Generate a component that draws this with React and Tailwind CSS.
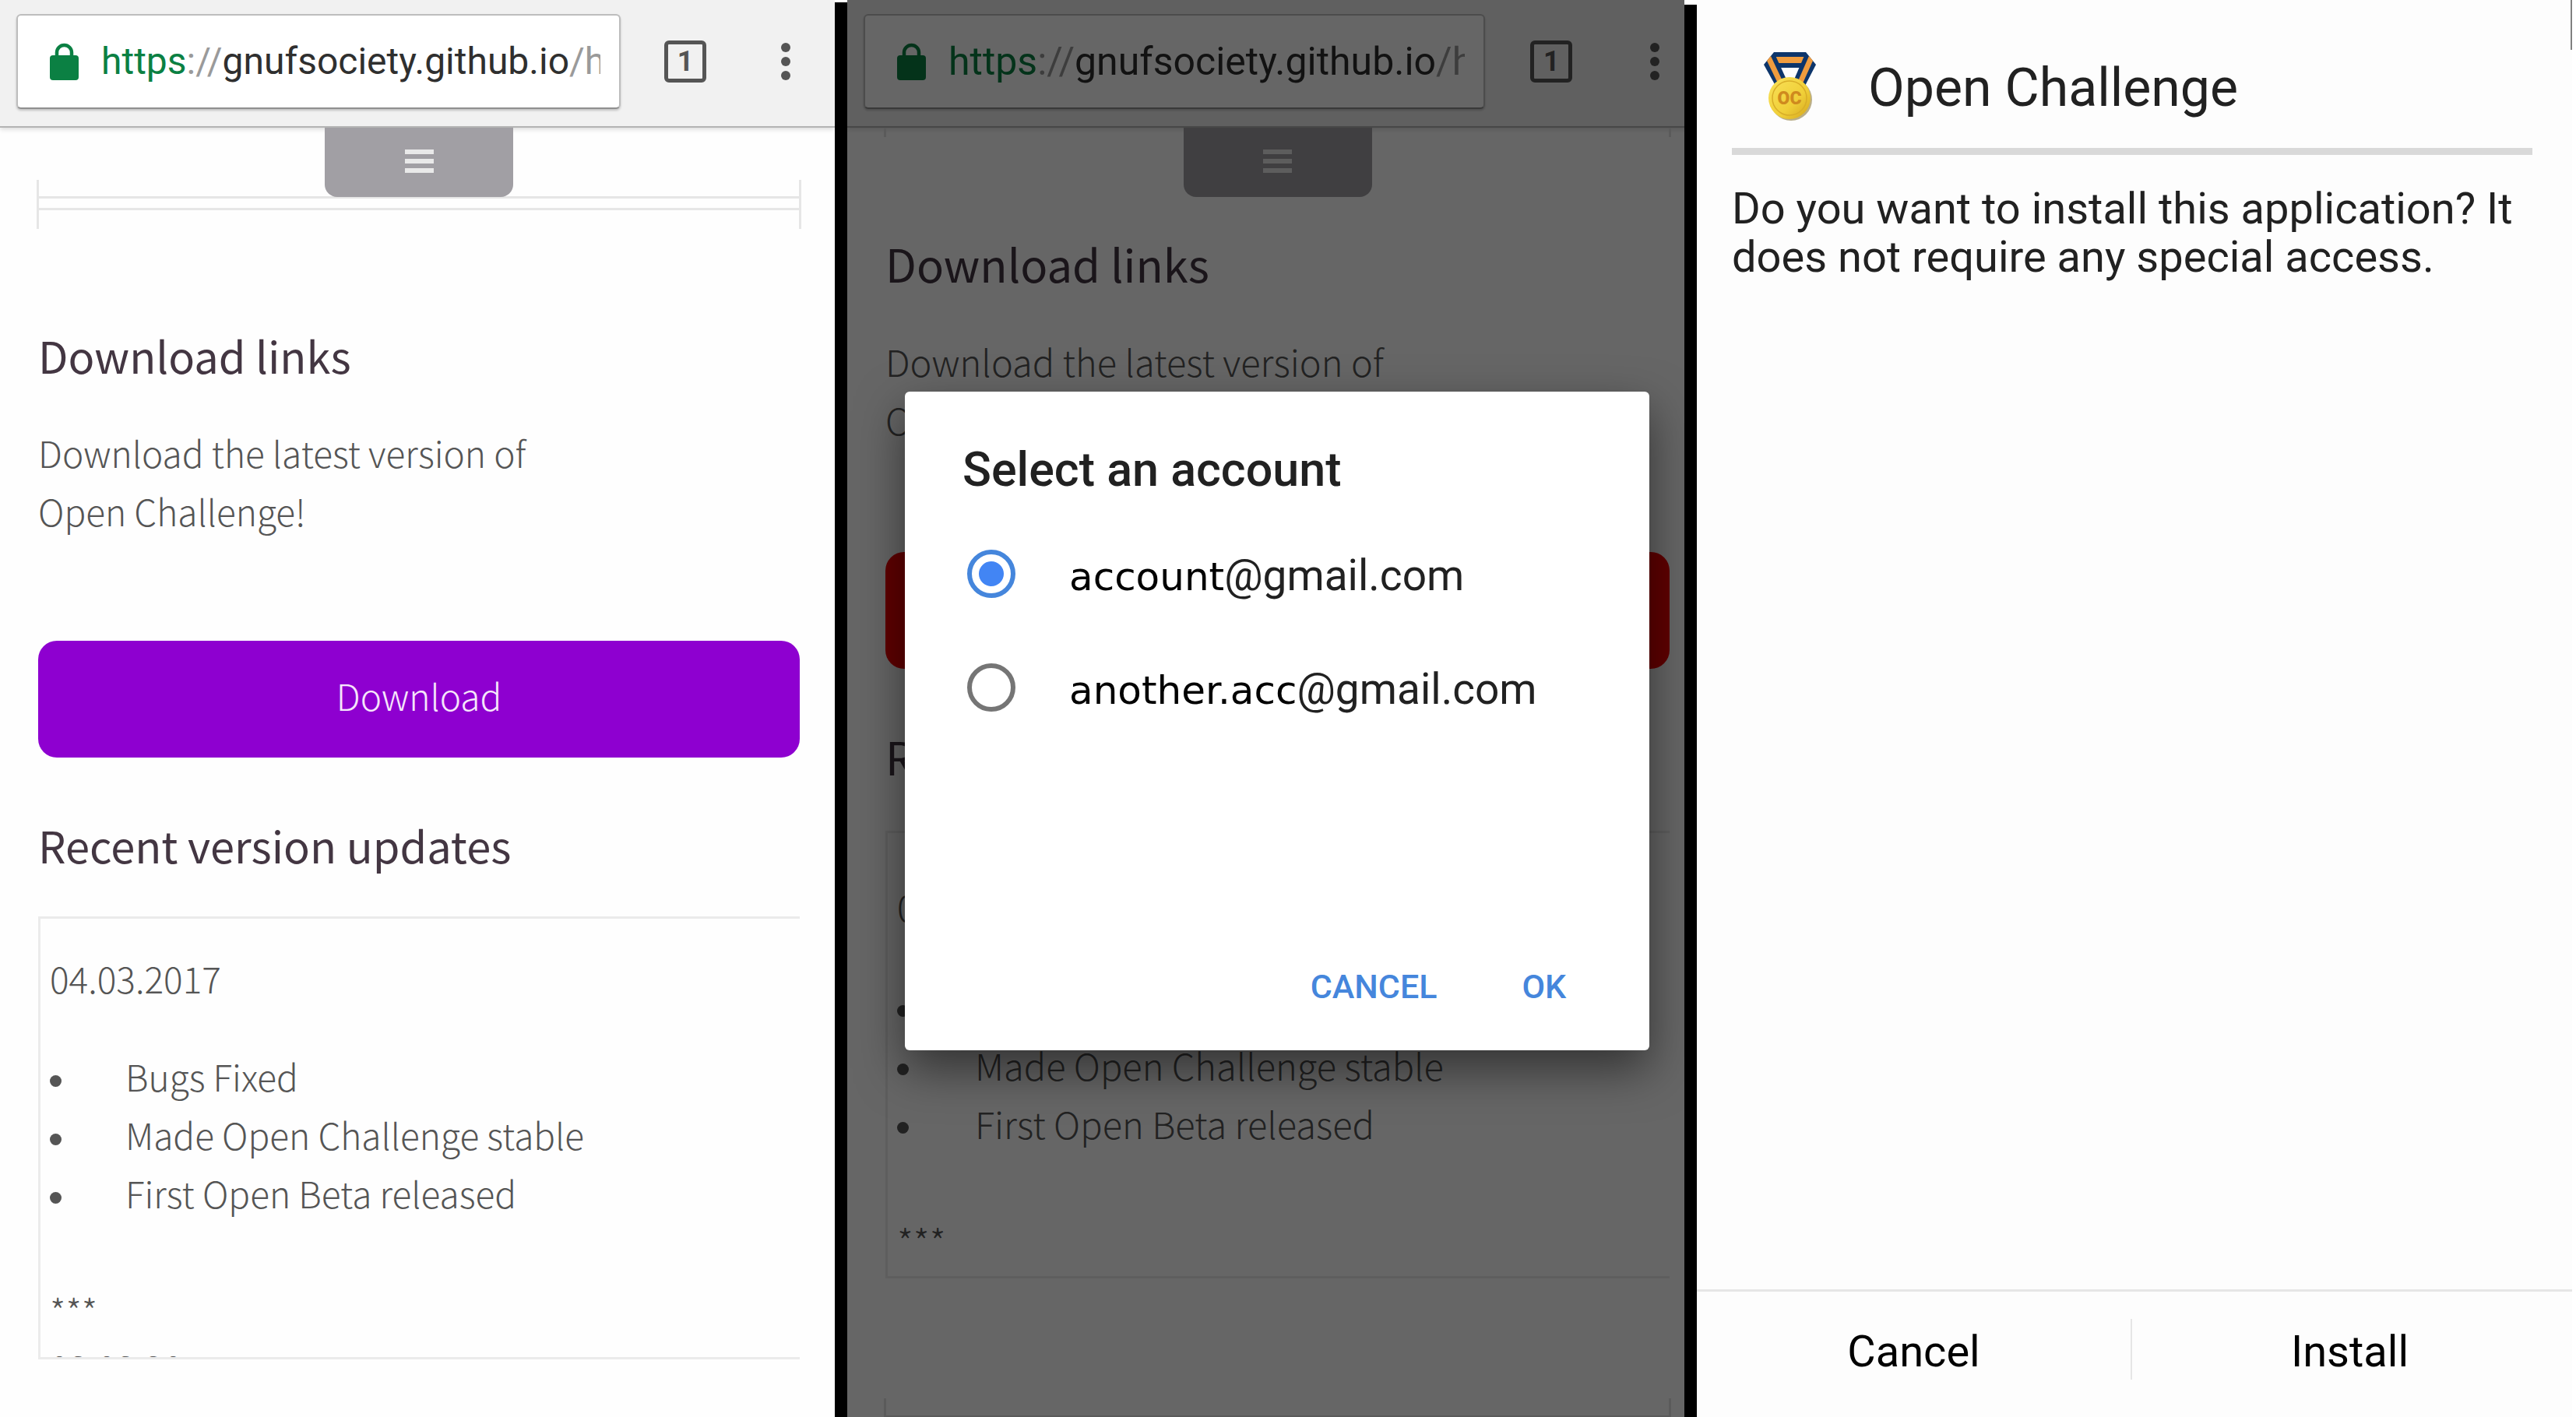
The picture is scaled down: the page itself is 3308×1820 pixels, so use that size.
import React from "react";

const releases = ["Bugs Fixed", "Made Open Challenge stable", "First Open Beta released"];

const small = {
  bar: "pr-[57px]",
  tabs: "ml-[56px]",
  dots: "ml-[96px]",
  main: "mr-[45px]",
  heading: "text-[56px]",
  body: "text-[46px]",
  url: "text-[48px]",
  rest: "pt-[126px]",
  buttonGap: "mt-[129px]",
  logGap: "mt-[56px]",
  logPad: "pt-[39px]",
  logHeight: "h-[569px]",
  listGap: "mt-[51px]",
  itemGap: "before:mr-[82px]",
};

const large = {
  bar: "pr-[64px]",
  tabs: "ml-[58px]",
  dots: "ml-[100px]",
  main: "mr-[51px]",
  heading: "text-[58px]",
  body: "text-[47px]",
  url: "text-[50px]",
  rest: "pt-[126px]",
  buttonGap: "mt-[133px]",
  logGap: "mt-[60px]",
  logPad: "pt-[56px]",
  logHeight: "h-[575px]",
  listGap: "mt-[54px]",
  itemGap: "before:mr-[85px]",
};

function BrowserBar({ size }) {
  return (
    <header
      className={`flex h-[164px] items-center border-b-2 border-[#b4b4b4] bg-[#f1f1f1] pb-1 pl-[21px] font-[Roboto,sans-serif] shadow-[0_2px_6px_rgba(0,0,0,0.15)] ${size.bar}`}
    >
      <div className="flex h-[122px] min-w-0 flex-1 items-center rounded-md border-2 border-[#bdbdbd] border-b-[#8f8f8f] bg-white pl-[41px] pr-[24px] shadow-[0_2px_3px_rgba(0,0,0,0.2)]">
        <svg className="mr-[29px] h-[48px] w-[37px] shrink-0" viewBox="0 0 37 48" aria-hidden="true">
          <path d="M9 18V12.500a9.500 9.500 0 0 1 19 0V18" fill="none" stroke="#0b8043" strokeWidth="4.500" />
          <rect x="0" y="16" width="37" height="32" rx="4" fill="#0b8043" />
        </svg>
        <div
          role="textbox"
          aria-label="Address"
          contentEditable
          suppressContentEditableWarning
          className={`min-w-0 flex-1 overflow-hidden whitespace-nowrap leading-[64px] text-[#2f2f2f] ${size.url}`}
        >
          <span className="text-[#0b8043]">https</span>
          <span className="text-[#9a9a9a]">://</span>
          <span>gnufsociety.github.io</span>
          <span className="text-[#9a9a9a]">/h</span>
        </div>
      </div>
      <button
        type="button"
        aria-label="Open tabs"
        className={`flex size-[54px] shrink-0 items-center justify-center rounded-md border-[5px] border-[#555] text-[36px] font-bold text-[#555] ${size.tabs}`}
      >
        1
      </button>
      <button type="button" aria-label="More options" className={`flex shrink-0 flex-col gap-[6px] ${size.dots}`}>
        <span className="size-[12px] rounded-full bg-[#555]" />
        <span className="size-[12px] rounded-full bg-[#555]" />
        <span className="size-[12px] rounded-full bg-[#555]" />
      </button>
    </header>
  );
}

function MenuTab() {
  return (
    <button
      type="button"
      aria-label="Menu"
      className="absolute left-1/2 top-0 flex h-[89px] w-[242px] -translate-x-1/2 flex-col items-center gap-[6px] rounded-b-2xl bg-[#a19fa4] pt-[28px]"
    >
      <span className="h-[6px] w-[37px] bg-[#e9e9e9]" />
      <span className="h-[6px] w-[37px] bg-[#e9e9e9]" />
      <span className="h-[6px] w-[37px] bg-[#e9e9e9]" />
    </button>
  );
}

function DownloadPage({ size, children, buttonColor, footer }) {
  return (
    <>
      <BrowserBar size={size} />
      <main
        className={`relative ml-[49px] font-['Noto_Sans_CJK_SC',sans-serif] font-light text-[#555] ${size.main} ${size.body}`}
      >
        {children}
        <MenuTab />
        <h2 className={`font-normal leading-[72px] text-[#433642] ${size.rest} ${size.heading}`}>Download links</h2>
        <p className="mt-[52px] leading-[75px]">
          Download the latest version of
          <br />
          Open Challenge!
        </p>
        <button
          type="button"
          className={`flex h-[150px] w-full items-center justify-center rounded-3xl pb-[10px] text-[#f6e6fb] ${buttonColor} ${size.buttonGap}`}
        >
          Download
        </button>
        <h2 className={`mt-[76px] font-normal leading-[72px] text-[#433642] ${size.heading}`}>
          Recent version updates
        </h2>
        <div
          className={`overflow-hidden border-y-[3px] border-l-[3px] border-[#ebebeb] pl-[12px] leading-[75px] ${size.logGap} ${size.logPad} ${size.logHeight}`}
        >
          <p>04.03.2017</p>
          <ul className={size.listGap}>
            {releases.map((item) => (
              <li
                key={item}
                className={`flex items-center before:mt-[12px] before:size-[15px] before:rounded-full before:bg-[#555] before:content-[''] ${size.itemGap}`}
              >
                {item}
              </li>
            ))}
          </ul>
          <p className="mt-[78px] leading-[71px]">***</p>
          <p>03.03.2017</p>
        </div>
        {footer}
      </main>
    </>
  );
}

function Account({ id, name, checked }) {
  return (
    <div className="flex h-[76px] items-center">
      <input
        type="radio"
        name="account"
        id={id}
        defaultChecked={checked}
        className="flex size-[62px] shrink-0 appearance-none items-center justify-center rounded-full border-[6px] border-[#757575] before:hidden before:size-[32px] before:rounded-full before:bg-[#4285f4] before:content-[''] checked:border-[#4586dc] checked:before:block"
      />
      <label htmlFor={id} className="ml-[69px] whitespace-nowrap pt-[6px] text-[55px] leading-[76px] text-[#212121]">
        <span className="font-['DejaVu_Sans',sans-serif] text-[50px] text-black">{name}</span>
        @gmail.com
      </label>
    </div>
  );
}

function AccountDialog() {
  return (
    <div
      role="dialog"
      aria-labelledby="account-title"
      className="absolute left-[74px] right-[77px] top-[503px] flex h-[846px] flex-col rounded-md bg-white pb-[50px] pl-[74px] pr-[107px] pt-[60px] font-[Roboto,sans-serif] shadow-[0_24px_60px_rgba(0,0,0,0.5)]"
    >
      <h1 id="account-title" className="text-[61px] font-medium leading-[80px] text-[#212121]">
        Select an account
      </h1>
      <div className="ml-[6px] mt-[56px] flex flex-col gap-[70px]">
        <Account id="first" name="account" checked />
        <Account id="second" name="another.acc" />
      </div>
      <div className="mt-auto flex justify-end gap-[109px] text-[43px] font-medium leading-[64px] text-[#4586dc]">
        <button type="button">CANCEL</button>
        <button type="button">OK</button>
      </div>
    </div>
  );
}

function Medal() {
  return (
    <svg className="h-[90px] w-[70px] shrink-0" viewBox="0 0 70 90" aria-hidden="true">
      <defs>
        <linearGradient id="gold" x1="0" y1="0" x2="1" y2="1">
          <stop offset="0" stopColor="#f9e25a" />
          <stop offset="0.6" stopColor="#f0cf38" />
          <stop offset="1" stopColor="#d3a41c" />
        </linearGradient>
      </defs>
      <path d="M14 1H55V21H14Z" fill="#0d356b" />
      <path d="M14 7H55V15H14Z" fill="#f09c3e" />
      <path d="M26 21H43L37 36H32Z" fill="#fdfdfd" />
      <path d="M14 1L1 17L16 44L30 36Z" fill="#0d356b" />
      <path d="M10 6L5 12L19 41L25 38Z" fill="#f09c3e" />
      <path d="M55 1L68 17L54 44L40 36Z" fill="#0d356b" />
      <path d="M59 6L64 12L51 41L45 38Z" fill="#f09c3e" />
      <circle cx="36" cy="62" r="27" fill="#8d7a3a" opacity="0.6" />
      <circle cx="34" cy="60" r="27" fill="url(#gold)" />
      <circle cx="34" cy="60" r="22" fill="none" stroke="#d9ae28" strokeWidth="1.500" />
      <text
        x="34"
        y="68"
        textAnchor="middle"
        fontFamily="Roboto, sans-serif"
        fontWeight="900"
        fontSize="23"
        fill="#cf8a1e"
      >
        OC
      </text>
    </svg>
  );
}

function InstallScreen() {
  return (
    <section className="relative flex flex-col bg-[#fdfdfd] font-[Roboto,sans-serif] text-[#212121]">
      <div className="pl-[45px] pr-[51px]">
        <header className="flex h-[199px] items-center gap-[65px] border-b-[9px] border-[#d9d9d9] pl-[40px] pt-[32px]">
          <Medal />
          <h1 className="whitespace-nowrap pt-[4px] text-[68px] leading-[80px]">Open Challenge</h1>
        </header>
        <p className="mt-[38px] text-[56px] leading-[62px]">
          Do you want to install this application? It does not require any special access.
        </p>
      </div>
      <footer className="mt-auto grid h-[164px] grid-cols-2 items-center border-t-[3px] border-[#e6e6e6] pb-[14px] pr-[6px] text-[56px] text-black">
        <button type="button" className="h-[78px] border-r-2 border-[#e6e6e6]">
          Cancel
        </button>
        <button type="button" className="h-[78px]">Install</button>
      </footer>
      <div className="absolute right-0 top-0 h-[64px] w-[2px] bg-[#808080]" />
    </section>
  );
}

export default function App() {
  return (
    <div className="grid h-screen grid-cols-[1072fr_16px_1075fr_16px_1124fr_5px] overflow-hidden bg-white">
      <section className="min-w-0 overflow-hidden bg-[#fefefe]">
        <DownloadPage size={small} buttonColor="bg-[#8e00d0]">
          <div className="-mx-[2px] pt-[67px]">
            <div className="flex h-[63px] flex-col border-x-[3px] border-[#e6e6e6] pt-[21px]">
              <div className="h-[18px] border-y-[3px] border-[#e6e6e6]" />
            </div>
          </div>
        </DownloadPage>
      </section>
      <div className="mt-[3px] bg-black" />
      <section className="min-w-0 overflow-hidden bg-white">
        <div className="relative h-full w-[103%] overflow-hidden">
          <DownloadPage
            size={large}
            buttonColor="bg-[#f00000]"
            footer={
              <div className="-mx-[2px] mt-[154px] h-[60px] border-x-[3px] border-[#e0e0e0] pt-[22px]">
                <div className="h-[18px] border-y-[3px] border-[#e0e0e0]" />
              </div>
            }
          >
            <div className="-mx-[2px] h-[12px] border-x-[3px] border-[#e0e0e0]" />
          </DownloadPage>
          <div className="absolute inset-0 bg-black/60" />
          <AccountDialog />
        </div>
      </section>
      <div className="mt-[6px] bg-black" />
      <InstallScreen />
    </div>
  );
}
